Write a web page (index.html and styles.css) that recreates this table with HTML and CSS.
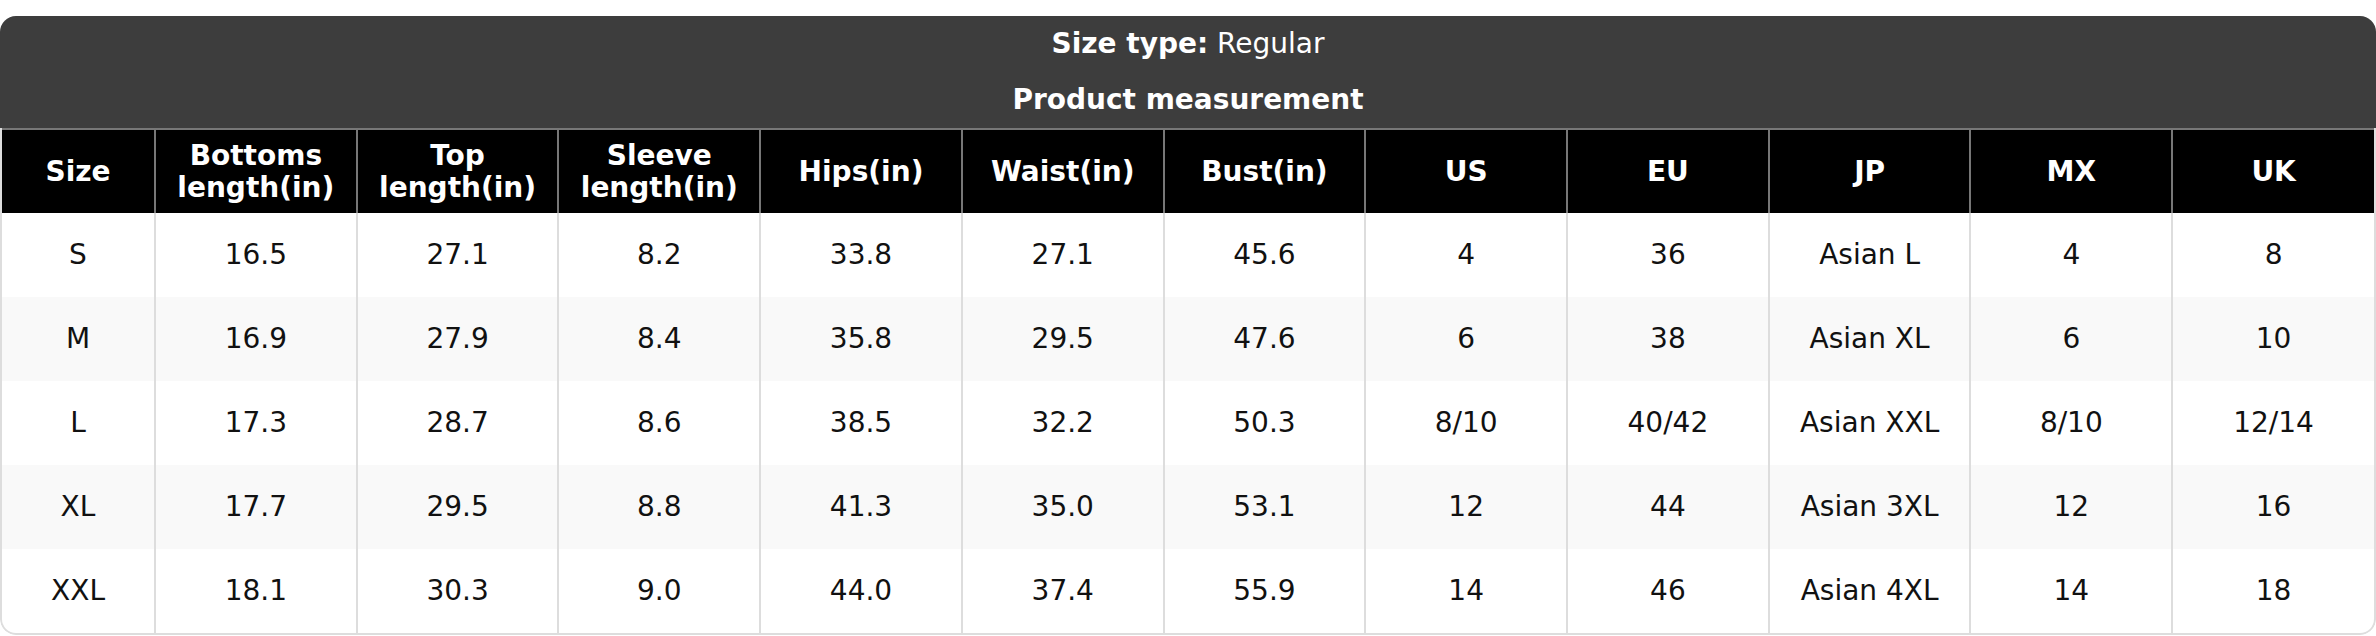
FILE: index.html
```html
<!DOCTYPE html>
<html>
<head>
<meta charset="utf-8">
<link rel="stylesheet" href="styles.css">
</head>
<body>
<div class="card">
  <div class="title">
    <div class="title-line"><b>Size type:</b> Regular</div>
    <div class="title-line"><b>Product measurement</b></div>
  </div>
  <div class="table-wrap">
    <table class="chart">
      <colgroup>
        <col class="col-first">
        <col><col><col><col><col><col><col><col><col><col><col>
      </colgroup>
      <thead>
        <tr>
          <th>Size</th>
          <th>Bottoms<br>length(in)</th>
          <th>Top<br>length(in)</th>
          <th>Sleeve<br>length(in)</th>
          <th>Hips(in)</th>
          <th>Waist(in)</th>
          <th>Bust(in)</th>
          <th>US</th>
          <th>EU</th>
          <th>JP</th>
          <th>MX</th>
          <th>UK</th>
        </tr>
      </thead>
      <tbody>
        <tr><td>S</td><td>16.5</td><td>27.1</td><td>8.2</td><td>33.8</td><td>27.1</td><td>45.6</td><td>4</td><td>36</td><td>Asian L</td><td>4</td><td>8</td></tr>
        <tr><td>M</td><td>16.9</td><td>27.9</td><td>8.4</td><td>35.8</td><td>29.5</td><td>47.6</td><td>6</td><td>38</td><td>Asian XL</td><td>6</td><td>10</td></tr>
        <tr><td>L</td><td>17.3</td><td>28.7</td><td>8.6</td><td>38.5</td><td>32.2</td><td>50.3</td><td>8/10</td><td>40/42</td><td>Asian XXL</td><td>8/10</td><td>12/14</td></tr>
        <tr><td>XL</td><td>17.7</td><td>29.5</td><td>8.8</td><td>41.3</td><td>35.0</td><td>53.1</td><td>12</td><td>44</td><td>Asian 3XL</td><td>12</td><td>16</td></tr>
        <tr><td>XXL</td><td>18.1</td><td>30.3</td><td>9.0</td><td>44.0</td><td>37.4</td><td>55.9</td><td>14</td><td>46</td><td>Asian 4XL</td><td>14</td><td>18</td></tr>
      </tbody>
    </table>
  </div>
</div>
</body>
</html>
```

FILE: styles.css
```css
html, body {
  margin: 0;
  padding: 0;
  background: #ffffff;
}
body {
  padding-top: 16px;
  font-family: "DejaVu Sans", Verdana, sans-serif;
  font-size: 28px;
  color: #111111;
}
.card {
  width: 2376px;
  border-radius: 16px;
  overflow: hidden;
}
.title {
  background: #3d3d3d;
  color: #ffffff;
  text-align: center;
}
.title-line {
  height: 56px;
  line-height: 56px;
}
.title b {
  font-weight: bold;
}
.table-wrap {
  border: 2px solid #dddddd;
  border-top: none;
  border-radius: 0 0 16px 16px;
  overflow: hidden;
}
.chart {
  width: 100%;
  table-layout: fixed;
  border-collapse: collapse;
}
.col-first {
  width: 153px;
}
.chart th {
  background: #000000;
  color: #ffffff;
  font-weight: bold;
  line-height: 32px;
  height: 83px;
  padding: 0 4px;
  border-left: 2px solid #777777;
  border-top: 2px solid #777777;
  text-align: center;
  vertical-align: middle;
}
.chart th:first-child,
.chart td:first-child {
  border-left: none;
}
.chart td {
  height: 84px;
  padding: 0 4px;
  text-align: center;
  vertical-align: middle;
  border-left: 2px solid #dddddd;
  line-height: 32px;
}
.chart tbody tr:nth-child(even) td {
  background: #f9f9f9;
}
```
